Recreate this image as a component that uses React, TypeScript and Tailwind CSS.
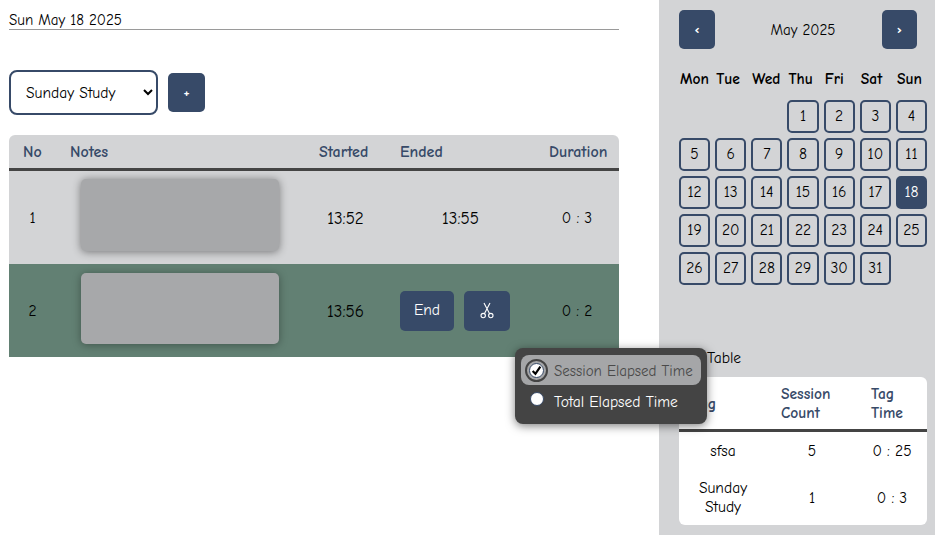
import React from 'react';

const days: (number | null)[] = [null, null, null, ...Array.from({ length: 31 }, (_, i) => i + 1)];
const weekDays = ['Mon', 'Tue', 'Wed', 'Thu', 'Fri', 'Sat', 'Sun'];

const ScissorsIcon = () => (
  <svg width="14" height="17" viewBox="0 0 14 17" fill="none" stroke="currentColor" strokeWidth="1.1">
    <circle cx="3.2" cy="13.6" r="2.2" />
    <circle cx="10.8" cy="13.6" r="2.2" />
    <path d="M4.4 11.7 L10 1 M9.6 11.7 L4 1" />
  </svg>
);

const App: React.FC = () => {
  return (
    <div className="relative flex h-screen w-full overflow-hidden bg-white text-black font-['Comic_Sans_MS','Comic_Neue','Open_Sans',sans-serif] text-[15px]">
      <main className="w-[659px] shrink-0 px-[9px] pr-[40px]">
        <div className="mt-[11px] h-[19px] border-b border-[#9a9a9a] leading-[18px]">Sun May 18 2025</div>

        <div className="mt-[40px] flex items-center gap-[10px]">
          <select className="h-[45px] w-[149px] rounded-lg border-2 border-[#374a68] bg-white pl-[11px] text-[15.5px]" defaultValue="Sunday Study">
            <option>Sunday Study</option>
            <option>sfsa</option>
          </select>
          <button className="h-[39px] w-[37px] rounded-[5px] bg-[#374a68] text-[14px] font-bold text-white">+</button>
        </div>

        <div className="mt-[20px] overflow-hidden rounded-t-md">
          <table className="w-[610px] table-fixed border-separate border-spacing-0 text-center">
            <colgroup>
              <col className="w-[47px]" />
              <col className="w-[249px]" />
              <col className="w-[81px]" />
              <col className="w-[149px]" />
              <col className="w-[84px]" />
            </colgroup>
            <thead>
              <tr className="bg-[#d3d4d6] text-left text-[16px] font-bold text-[#374a68]">
                <th className="h-[36px] border-b-[3px] border-[#444444] pl-[14px]">No</th>
                <th className="h-[36px] border-b-[3px] border-[#444444] pl-[14px]">Notes</th>
                <th className="h-[36px] border-b-[3px] border-[#444444] pl-[14px]">Started</th>
                <th className="h-[36px] border-b-[3px] border-[#444444] pl-[14px]">Ended</th>
                <th className="h-[36px] border-b-[3px] border-[#444444] pl-[14px]">Duration</th>
              </tr>
            </thead>
            <tbody className="text-[15.5px]">
              <tr className="h-[93px] bg-[#d3d4d6]">
                <td className="pt-[2px]">1</td>
                <td>
                  <div className="mb-[5px] ml-[25px] h-[72px] w-[198px] rounded-[5px] bg-[#a7a8aa] shadow-[0_1px_8px_rgba(0,0,0,0.45)]" />
                </td>
                <td className="pt-[2px] text-[17px]">13:52</td>
                <td className="pt-[2px] text-[17px]">13:55</td>
                <td className="pt-[2px]">0 : 3</td>
              </tr>
              <tr className="h-[93px] bg-[#628073]">
                <td className="pt-[2px]">2</td>
                <td>
                  <div className="mb-[4px] ml-[25px] h-[71px] w-[198px] rounded-[5px] bg-[#a7a8aa] shadow-[0_1px_8px_rgba(0,0,0,0.35)]" />
                </td>
                <td className="pt-[2px] text-[17px]">13:56</td>
                <td className="pl-[14px]">
                  <div className="flex gap-[10px]">
                    <button className="h-[40px] w-[54px] rounded-[5px] bg-[#374a68] text-white">End</button>
                    <button className="flex h-[40px] w-[46px] items-center justify-center rounded-[5px] bg-[#374a68] text-white">
                      <ScissorsIcon />
                    </button>
                  </div>
                </td>
                <td className="pt-[2px]">0 : 2</td>
              </tr>
            </tbody>
          </table>
        </div>
      </main>

      <aside className="h-full w-[276px] bg-[#d3d4d6] pl-[20px] pr-[8px] pt-[10px]">
        <div className="flex items-center justify-between pr-[10px]">
          <button className="h-[39px] w-[36px] rounded-[5px] bg-[#374a68] text-[14px] font-bold text-white">‹</button>
          <span className="ml-[9px] mt-[2px]">May 2025</span>
          <button className="h-[39px] w-[35px] rounded-[5px] bg-[#374a68] text-[14px] font-bold text-white">›</button>
        </div>

        <div className="mt-[22px] grid w-[248px] grid-cols-7 gap-x-[5.17px] gap-y-[5px]">
          {weekDays.map((d) => (
            <div key={d} className="mb-[8px] h-[16px] whitespace-nowrap pl-px text-[15.5px] font-bold leading-[16px]">{d}</div>
          ))}
          {days.map((d, i) =>
            d === null ? (
              <div key={`empty-${i}`} />
            ) : (
              <button
                key={d}
                className={`h-[33px] rounded-[5px] border-2 border-[#374a68] text-[15.5px] ${d === 18 ? 'bg-[#374a68] text-white' : ''}`}
              >
                {d}
              </button>
            )
          )}
        </div>

        <div className="mt-[63px] h-[20px] text-[15.5px] leading-[20px]">Tag Table</div>
        <div className="mt-[9px] w-[248px] overflow-hidden rounded-md bg-white">
          <table className="w-full table-fixed border-separate border-spacing-0 text-center text-[15.5px]">
            <colgroup>
              <col className="w-[88px]" />
              <col className="w-[90px]" />
              <col className="w-[70px]" />
            </colgroup>
            <thead>
              <tr className="text-left font-bold leading-[19px] text-[#374a68]">
                <th className="h-[55px] border-b-[3px] border-[#444444] pl-[14px] pt-[2px]">Tag</th>
                <th className="h-[55px] border-b-[3px] border-[#444444] pl-[14px] pt-[2px]">Session<br />Count</th>
                <th className="h-[55px] border-b-[3px] border-[#444444] pl-[14px] pt-[2px]">Tag<br />Time</th>
              </tr>
            </thead>
            <tbody>
              <tr className="h-[38px]">
                <td className="pt-[2px]">sfsa</td>
                <td className="pt-[2px]">5</td>
                <td className="pt-[2px]">0 : 25</td>
              </tr>
              <tr className="h-[55px] leading-[19px]">
                <td>Sunday<br />Study</td>
                <td className="pt-[2px]">1</td>
                <td className="pt-[2px]">0 : 3</td>
              </tr>
            </tbody>
          </table>
        </div>
      </aside>

      {/* elapsed time popup */}
      <div className="absolute left-[515px] top-[348px] h-[76px] w-[192px] rounded-lg bg-[#444444] px-[6px] pt-[7px] shadow-[0_2px_10px_rgba(0,0,0,0.5)]">
        <div className="flex h-[30px] items-center rounded-lg bg-[#a5a6a8] pl-[4px] text-[#4a4a4a]">
          <span className="flex h-[23px] w-[23px] items-center justify-center rounded-full border-2 border-[#444444]">
            <span className="flex h-[15px] w-[15px] items-center justify-center rounded-full border border-[#374a68] bg-white">
              <svg width="11" height="11" viewBox="0 0 10 10" fill="none" stroke="black" strokeWidth="2">
                <path d="M1.5 5.5 L4 8 L8.5 1.5" />
              </svg>
            </span>
          </span>
          <span className="ml-[6px] mt-[2px] whitespace-nowrap text-[15px]">Session Elapsed Time</span>
        </div>
        <div className="flex h-[31px] items-center pl-[9px] text-white">
          <span className="-mt-[3px] h-[14px] w-[14px] rounded-full border border-[#374a68] bg-white" />
          <span className="ml-[10px] mt-[5px] whitespace-nowrap text-[15.5px]">Total Elapsed Time</span>
        </div>
      </div>
    </div>
  );
};

export default App;
